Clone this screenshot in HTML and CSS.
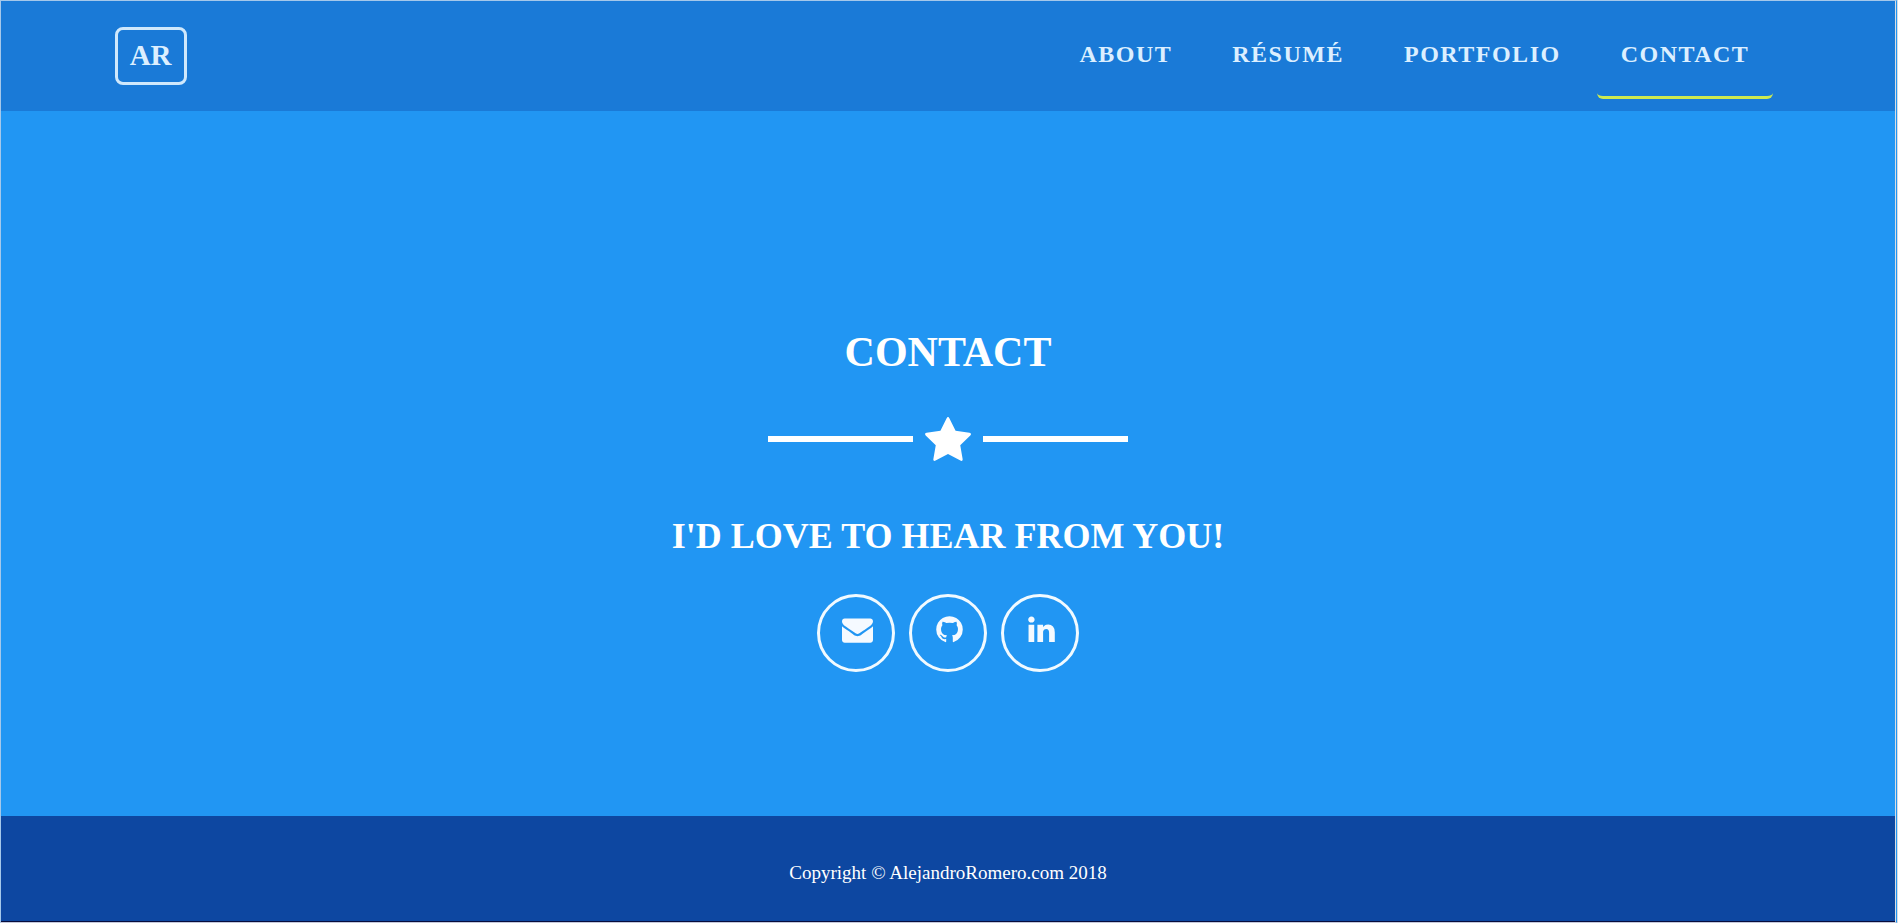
FILE: index.html
```html
<!DOCTYPE html>
<html lang="en">
<head>
<meta charset="utf-8">
<title>Alejandro Romero - Contact</title>
<meta name="viewport" content="width=device-width, initial-scale=1">
<link rel="stylesheet" href="styles.css">
</head>
<body>
<header class="navbar">
  <a class="brand" href="#top">AR</a>
  <nav>
    <ul class="nav-list">
      <li><a class="nav-link" href="#about">ABOUT</a></li>
      <li><a class="nav-link" href="#resume">RÉSUMÉ</a></li>
      <li><a class="nav-link" href="#portfolio">PORTFOLIO</a></li>
      <li><a class="nav-link active" href="#contact" aria-current="page">CONTACT</a></li>
    </ul>
  </nav>
</header>
<main class="contact" id="contact">
  <h1 class="title">CONTACT</h1>
  <div class="divider">
    <svg class="star" viewBox="64 32 1664 1587" aria-hidden="true"><path d="M1728 647q0 22-26 48l-363 354 86 500q1 7 1 20 0 21-10.500 35.500t-30.500 14.500q-19 0-40-12l-449-236-449 236q-22 12-40 12-21 0-31.500-14.500t-10.500-35.500q0-6 2-20l86-500-364-354q-25-27-25-48 0-37 56-46l502-73 225-455q19-41 49-41t49 41l225 455 502 73q56 9 56 46z"/></svg>
  </div>
  <h2 class="subtitle">I'D LOVE TO HEAR FROM YOU!</h2>
  <ul class="social">
    <li><a class="social-link" href="#email" aria-label="Email"><svg class="icon" viewBox="0 0 1792 1792" aria-hidden="true"><path d="M1792 710v794q0 66-47 113t-113 47h-1472q-66 0-113-47t-47-113v-794q44 49 101 87 362 246 497 345 57 42 92.500 65.500t94.500 48 110 24.500h2q51 0 110-24.500t94.500-48 92.500-65.500q170-123 498-345 57-39 100-87zM1792 416q0 79-49 151t-122 123q-376 261-468 325-10 7-42.500 30.500t-54 38-52 32.500-57.500 27-50 9h-2q-23 0-50-9t-57.500-27-52-32.500-54-38-42.500-30.500q-91-64-262-182.500t-205-142.500q-62-42-117-115.500t-55-136.500q0-78 41.500-130t118.500-52h1472q65 0 112.500 47t47.500 113z"/></svg></a></li>
    <li><a class="social-link" href="#github" aria-label="GitHub"><svg class="icon" viewBox="0 0 1792 1792" aria-hidden="true"><path d="M896 128q209 0 385.500 103t279.500 279.500 103 385.500q0 251-146.500 451.500t-378.500 277.500q-27 5-40-7t-13-30q0-3 .5-76.500t.5-134.500q0-97-52-142 57-6 102.500-18t94-39 81-66.500 53-105 20.500-150.500q0-119-79-206 37-91-8-204-28-9-81 11t-92 44l-38 24q-93-26-192-26t-192 26q-16-11-42.500-27t-83.500-38.500-85-13.500q-45 113-8 204-79 87-79 206 0 85 20.500 150t52.500 105 80.500 67 94 39 102.500 18q-39 36-49 103-21 10-45 15t-57 5-65.500-21.500-55.500-62.500q-19-32-48.500-52t-49.500-24l-20-3q-21 0-29 4.500t-5 11.500 9 14 13 12l7 5q22 10 43.500 38t31.500 51l10 23q13 38 44 61.500t67 30 69.500 7 55.500-3.500l23-4q0 38 .5 88.500t.5 54.500q0 18-13 30t-40 7q-232-77-378.500-277.500t-146.500-451.500q0-209 103-385.500t279.500-279.500 385.500-103z"/></svg></a></li>
    <li><a class="social-link" href="#linkedin" aria-label="LinkedIn"><svg class="icon" viewBox="0 0 1792 1792" aria-hidden="true"><path d="M477 625v991h-330v-991h330zM498 319q1 73-50.500 122t-135.500 49h-2q-82 0-132-49t-50-122q0-74 51.500-122.500t134.500-48.500 133 48.500 51 122.500zM1664 1048v568h-329v-530q0-105-40.500-164.500t-126.500-59.500q-63 0-105.500 34.500t-63.500 85.500q-11 30-11 81v553h-329q2-399 2-647t-1-296l-1-48h329v144h-2q20-32 41-56t56.500-52 87-43.500 114.500-15.500q171 0 275 113.500t104 332.500z"/></svg></a></li>
  </ul>
</main>
<footer class="footer">Copyright © AlejandroRomero.com 2018</footer>
</body>
</html>
```
FILE: styles.css
```css
* {
  box-sizing: border-box;
}

body {
  margin: 0;
  min-height: 100vh;
  display: flex;
  flex-direction: column;
  font-family: "Liberation Serif", "Times New Roman", serif;
  color: #fff;
  background: #2196f3;
  border: 1px solid #a5c8ea;
  border-right: 3px double #d5dde5;
  border-bottom-color: #c5c9dc;
}

ul {
  margin: 0;
  padding: 0;
  list-style: none;
}

a {
  color: inherit;
  text-decoration: none;
}

.navbar {
  display: flex;
  align-items: center;
  justify-content: space-between;
  padding: 12px 6%;
  background: #1a7ad7;
  color: #dcefff;
  font-weight: bold;
}

.brand {
  padding: 8px 12px 10px;
  border: 3px solid #cfe8fc;
  border-radius: 8px;
  font-size: 29px;
  line-height: 34px;
}

.nav-list {
  display: flex;
  gap: 12px;
  padding-right: 8px;
}

.nav-link {
  display: block;
  padding: 24px;
  border-bottom: 3px solid transparent;
  border-radius: 6px;
  font-size: 24px;
  line-height: 35px;
  letter-spacing: 0.0625em;
}

.nav-link.active {
  border-bottom-color: #cdea50;
}

.contact {
  flex: 1;
  display: flex;
  flex-direction: column;
  align-items: center;
  justify-content: center;
  padding-top: 72px;
}

.title {
  margin: 0;
  font-size: 42px;
  line-height: 50px;
}

.divider {
  display: flex;
  align-items: center;
  gap: 12px;
  width: 360px;
  margin: 40px 0 53px;
}

.divider::before,
.divider::after {
  content: "";
  flex: 1;
  height: 6px;
  background: #fff;
}

.star {
  width: 46px;
  height: 44px;
  fill: #fff;
}

.subtitle {
  margin: 0;
  font-size: 36px;
  line-height: 44px;
}

.social {
  display: flex;
  gap: 14px;
  margin-top: 36px;
}

.social-link {
  display: flex;
  align-items: center;
  justify-content: center;
  width: 78px;
  height: 78px;
  padding: 0 0 8px 2px;
  border: 3px solid #f1faff;
  border-radius: 50%;
}

.icon {
  width: 31px;
  height: 31px;
  fill: #f5faff;
}

.footer {
  padding: 46px 24px 37px;
  border-bottom: 1px solid #080d3c;
  background: #0d47a1;
  font-size: 19px;
  line-height: 22px;
  text-align: center;
}
```
